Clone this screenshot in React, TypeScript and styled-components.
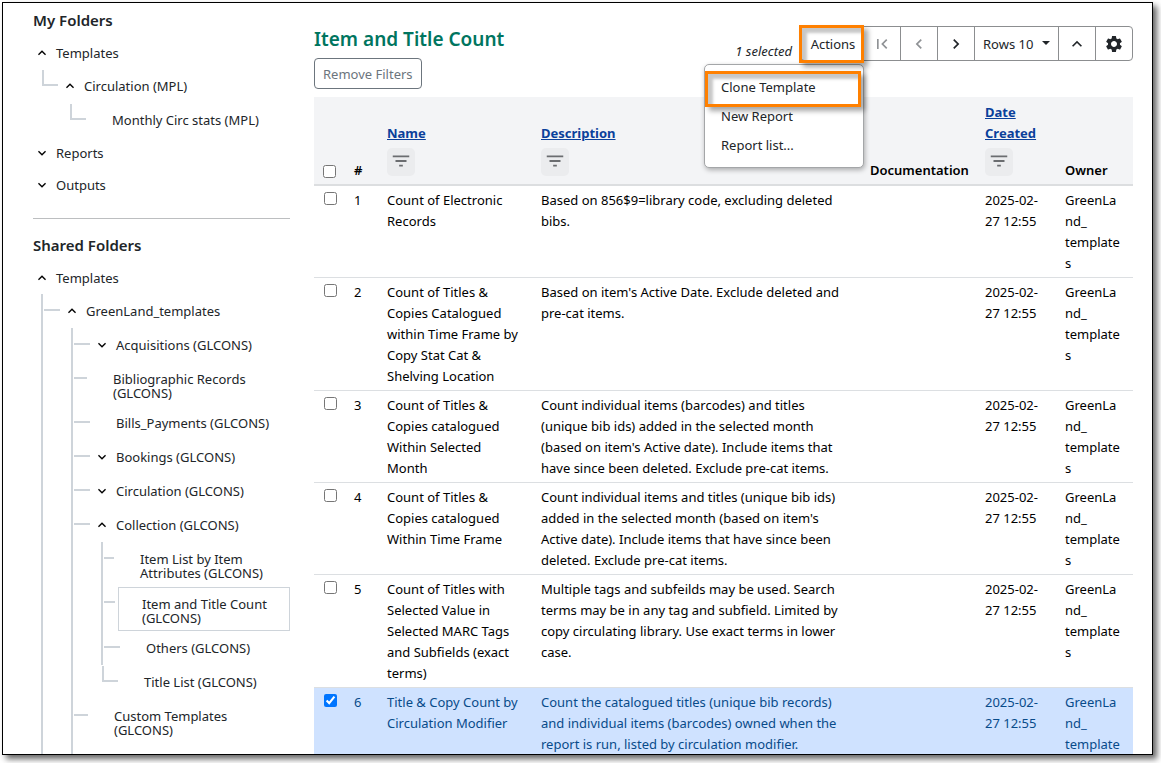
import React, { Fragment } from "react";
import styled, { createGlobalStyle, css } from "styled-components";
import {
  MdChevronLeft,
  MdChevronRight,
  MdExpandLess,
  MdExpandMore,
  MdFilterList,
  MdFirstPage,
  MdSettings,
} from "react-icons/md";

const GlobalStyle = createGlobalStyle`
  *, *::before, *::after { box-sizing: border-box; }
  body {
    margin: 0;
    background: #fff;
    color: #212529;
    font-family: "Noto Sans", "Open Sans", sans-serif;
    font-size: 13px;
    line-height: 21px;
  }
  button, select, input { font: inherit; color: inherit; }
`;

const Page = styled.div`
  height: 100vh;
  padding: 2px 8px 8px 2px;
  overflow: hidden;
`;

const Frame = styled.div`
  display: flex;
  gap: 24px;
  height: 100%;
  padding: 0 19px 0 30px;
  overflow: hidden;
  background: #fff;
  border: 1px solid #000;
  box-shadow: 4px 4px 6px rgba(0, 0, 0, 0.6);
`;

const Sidebar = styled.nav`
  flex: 0 0 257px;
  min-width: 0;
`;

const FolderSection = styled.section<{ $divided?: boolean }>`
  padding-top: 7px;
  ${(p) =>
    p.$divided &&
    css`
      padding-top: 16px;
      margin-top: 17px;
      border-top: 1px solid #bcbec0;
    `}
`;

const SectionTitle = styled.h2`
  margin: 0 0 6px;
  font-size: 15px;
  font-weight: 600;
  line-height: 21px;
`;

const TreeList = styled.ul<{ $indent?: number; $more?: boolean }>`
  margin: 0;
  margin-left: ${(p) => p.$indent ?? 0}px;
  padding: 0 0 ${(p) => (p.$more ? 24 : 0)}px;
  list-style: none;
`;

const TreeItem = styled.li<{ $line: boolean }>`
  ${(p) => p.$line && "border-left: 2px solid #ced4da;"}
`;

const TreeRow = styled.div<{ $root?: boolean }>`
  display: flex;
  align-items: flex-start;
  min-height: ${(p) => (p.$root ? 32 : 34)}px;
  padding-top: ${(p) => (p.$root ? 9 : 0)}px;
`;

const Tick = styled.span<{ $width: number; $corner: boolean }>`
  flex: none;
  width: ${(p) => p.$width}px;
  height: 17px;
  margin: 0 3px 0 1px;
  border-bottom: 2px solid #ced4da;
  ${(p) => p.$corner && "height: 16px; margin-top: 1px; border-left: 2px solid #ced4da;"}
`;

const TreeContent = styled.div<{ $root?: boolean; $selected?: boolean }>`
  display: flex;
  flex: 1;
  min-width: 0;
  padding: ${(p) => (p.$root ? 0 : "10px 8px 6px 0")};
  ${(p) =>
    p.$selected &&
    css`
      padding: 9px 8px 5px 0;
      margin-top: 1px;
      border: 1px solid #ced4da;
    `}
`;

const Toggle = styled.button`
  display: flex;
  flex: none;
  align-items: center;
  justify-content: center;
  width: 18px;
  height: 14px;
  margin-right: 5px;
  padding: 0;
  border: 0;
  background: none;
  color: #000;
`;

const ToggleSpace = styled.span`
  flex: none;
  width: 23px;
`;

const TreeLabel = styled.a`
  color: inherit;
  line-height: 14px;
  text-decoration: none;
`;

const Main = styled.main`
  flex: 1;
  min-width: 0;
`;

const GridHeader = styled.header`
  display: flex;
  align-items: flex-start;
  justify-content: space-between;
  padding: 23px 0 8px;
`;

const Heading = styled.h1`
  margin: 0 0 6px;
  color: #00755f;
  font-size: 19px;
  font-weight: 600;
  line-height: 26px;
`;

const FilterReset = styled.button`
  height: 31px;
  padding: 2px 8px 0;
  border: 1px solid #6c757d;
  border-radius: 4px;
  background: #fff;
  color: #6c757d;
`;

const Tools = styled.div`
  display: flex;
  align-items: flex-start;
`;

const SelectedCount = styled.em`
  padding: 15px 8px 0 0;
`;

const ToolGroup = styled.div`
  display: flex;
  height: 35px;
  border: 1px solid #8c8e90;
  border-radius: 4px;

  && > * + * {
    border-left: 1px solid #8c8e90;
  }
`;

const orangeMarker = css`
  content: "";
  position: absolute;
  border: 3px solid #ff8000;
  box-shadow: 4px 4px 5px rgba(0, 0, 0, 0.35), inset 5px 5px 3px rgba(0, 0, 0, 0.22);
  pointer-events: none;
`;

const ActionsBox = styled.div`
  position: relative;
  z-index: 2;
  width: 62px;

  &::after {
    ${orangeMarker}
    inset: -2px -1px -3px -2px;
  }
`;

const ToolButton = styled.button<{ $wide?: boolean }>`
  display: flex;
  align-items: center;
  justify-content: center;
  width: ${(p) => (p.$wide ? "100%" : "37px")};
  height: 33px;
  padding: ${(p) => (p.$wide ? "2px 0 0 2px" : 0)};
  border: 0;
  background: none;

  &:disabled {
    color: #8f9295;
  }
`;

const RowsField = styled.div`
  position: relative;
  width: 84px;

  &::after {
    content: "";
    position: absolute;
    top: 14px;
    right: 8px;
    border: 4px solid transparent;
    border-top-color: #212529;
    border-bottom: 0;
    pointer-events: none;
  }
`;

const RowsSelect = styled.select`
  width: 100%;
  height: 33px;
  padding: 2px 8px 0;
  border: 0;
  background: none;
  appearance: none;
`;

const Menu = styled.div`
  position: absolute;
  top: 37px;
  right: -1px;
  width: 160px;
  padding: 8px 0 7px;
  border: 1px solid #a4a6a8;
  border-radius: 5px;
  background: #fff;
  box-shadow: 1px 2px 5px rgba(0, 0, 0, 0.3);
`;

const MenuItem = styled.button<{ $marked?: boolean }>`
  position: relative;
  display: block;
  width: 100%;
  height: 29px;
  padding: 0 16px;
  border: 0;
  background: none;
  text-align: left;

  ${(p) =>
    p.$marked &&
    css`
      &::after {
        ${orangeMarker}
        inset: -2px 2px -5px 0;
      }
    `}
`;

const Table = styled.table`
  width: 100%;
  table-layout: fixed;
  border-collapse: separate;
  border-spacing: 0;
  color: #000;
`;

const Col = styled.col<{ $width?: number }>`
  ${(p) => p.$width && `width: ${p.$width}px;`}
`;

const HeadCell = styled.th<{ $check?: boolean }>`
  padding: 5px 8px 3px;
  ${(p) => p.$check && "padding: 5px 9px 6px;"}
  background: #f3f4f6;
  border-bottom: 2px solid #dcdee0;
  font-weight: 600;
  line-height: 21px;
  text-align: left;
  vertical-align: bottom;
`;

const SortLink = styled.a`
  display: block;
  color: #0a409b;
  font-weight: 700;
  text-decoration: underline;
`;

const FilterButton = styled.button`
  display: flex;
  align-items: center;
  justify-content: center;
  width: 28px;
  height: 28px;
  margin: 4px 0 5px;
  padding: 0 0 2px;
  border: 0;
  border-radius: 5px;
  background: #ebecee;
  color: #6b6d70;
`;

const Row = styled.tr<{ $selected: boolean }>`
  ${(p) => p.$selected && "background: #cfe2ff; color: #084b8a;"}
`;

const Cell = styled.td<{ $check?: boolean; $narrow?: boolean }>`
  padding: 4px 8px 3px;
  ${(p) => p.$check && "padding: 6px 10px;"}
  ${(p) => p.$narrow && "padding-right: 11px;"}
  border-bottom: 1px solid #dcdfe2;
  overflow-wrap: anywhere;
  vertical-align: top;
`;

const Checkbox = styled.input`
  display: block;
  width: 13px;
  height: 13px;
  margin: 0;
`;

type Folder = {
  name: string;
  state?: "open" | "closed";
  tick?: number;
  selected?: boolean;
  more?: boolean;
  children?: Folder[];
};

const myFolders: Folder[] = [
  {
    name: "Templates",
    state: "open",
    children: [
      { name: "Circulation (MPL)", state: "open", children: [{ name: "Monthly Circ stats (MPL)" }] },
    ],
  },
  { name: "Reports", state: "closed" },
  { name: "Outputs", state: "closed" },
];

const sharedFolders: Folder[] = [
  {
    name: "Templates",
    state: "open",
    more: true,
    children: [
      {
        name: "GreenLand_templates",
        state: "open",
        more: true,
        children: [
          { name: "Acquisitions (GLCONS)", state: "closed" },
          { name: "Bibliographic Records (GLCONS)", tick: 13 },
          { name: "Bills_Payments (GLCONS)" },
          { name: "Bookings (GLCONS)", state: "closed" },
          { name: "Circulation (GLCONS)", state: "closed" },
          {
            name: "Collection (GLCONS)",
            state: "open",
            children: [
              { name: "Item List by Item Attributes (GLCONS)", tick: 10 },
              { name: "Item and Title Count (GLCONS)", tick: 11, selected: true },
              { name: "Others (GLCONS)" },
              { name: "Title List (GLCONS)" },
            ],
          },
          { name: "Custom Templates (GLCONS)", tick: 14, more: true },
        ],
      },
    ],
  },
];

function Tree({ items, level = 0, more }: { items: Folder[]; level?: number; more?: boolean }) {
  const root = level === 0;
  const indent = root ? 0 : level === 1 ? 8 : 28;
  return (
    <TreeList $indent={indent}>
      {items.map((item, i) => {
        const last = i === items.length - 1 && !more;
        return (
          <TreeItem key={item.name} $line={!root && !last}>
            <TreeRow $root={root}>
              {!root && <Tick $width={item.tick ?? 16} $corner={last} />}
              <TreeContent $root={root} $selected={item.selected}>
                {item.state ? (
                  <Toggle aria-label={`Toggle ${item.name}`} aria-expanded={item.state === "open"}>
                    {item.state === "open" ? <MdExpandLess size={16} /> : <MdExpandMore size={16} />}
                  </Toggle>
                ) : (
                  <ToggleSpace />
                )}
                <TreeLabel href="#">{item.name}</TreeLabel>
              </TreeContent>
            </TreeRow>
            {item.children && <Tree items={item.children} level={level + 1} more={item.more} />}
            {item.more && !item.children && <TreeList $more />}
          </TreeItem>
        );
      })}
    </TreeList>
  );
}

const reports = [
  ["Count of Electronic Records", "Based on 856$9=library code, excluding deleted bibs."],
  [
    "Count of Titles & Copies Catalogued within Time Frame by Copy Stat Cat & Shelving Location",
    "Based on item's Active Date. Exclude deleted and pre-cat items.",
  ],
  [
    "Count of Titles & Copies catalogued Within Selected Month",
    "Count individual items (barcodes) and titles (unique bib ids) added in the selected month (based on item's Active date). Include items that have since been deleted. Exclude pre-cat items.",
  ],
  [
    "Count of Titles & Copies catalogued Within Time Frame",
    "Count individual items and titles (unique bib ids) added in the selected month (based on item's Active date). Include items that have since been deleted. Exclude pre-cat items.",
  ],
  [
    "Count of Titles with Selected Value in Selected MARC Tags and Subfields (exact terms)",
    "Multiple tags and subfeilds may be used. Search terms may be in any tag and subfield. Limited by copy circulating library. Use exact terms in lower case.",
  ],
  [
    "Title & Copy Count by Circulation Modifier",
    "Count the catalogued titles (unique bib records) and individual items (barcodes) owned when the report is run, listed by circulation modifier.",
  ],
];

function SortableHead({ label }: { label: string }) {
  return (
    <HeadCell scope="col">
      <SortLink href="#">{label}</SortLink>
      <FilterButton aria-label={`Filter ${label}`}>
        <MdFilterList size={22} />
      </FilterButton>
    </HeadCell>
  );
}

export default function App() {
  return (
    <Fragment>
      <GlobalStyle />
      <Page>
        <Frame>
          <Sidebar aria-label="Folders">
            <FolderSection>
              <SectionTitle>My Folders</SectionTitle>
              <Tree items={myFolders} />
            </FolderSection>
            <FolderSection $divided>
              <SectionTitle>Shared Folders</SectionTitle>
              <Tree items={sharedFolders} />
            </FolderSection>
          </Sidebar>
          <Main>
            <GridHeader>
              <div>
                <Heading>Item and Title Count</Heading>
                <FilterReset>Remove Filters</FilterReset>
              </div>
              <Tools>
                <SelectedCount>1 selected</SelectedCount>
                <ToolGroup>
                  <ActionsBox>
                    <ToolButton $wide aria-haspopup="menu" aria-expanded>
                      Actions
                    </ToolButton>
                    <Menu role="menu">
                      <MenuItem role="menuitem" $marked>
                        Clone Template
                      </MenuItem>
                      <MenuItem role="menuitem">New Report</MenuItem>
                      <MenuItem role="menuitem">Report list...</MenuItem>
                    </Menu>
                  </ActionsBox>
                  <ToolButton disabled aria-label="First page">
                    <MdFirstPage size={20} />
                  </ToolButton>
                  <ToolButton disabled aria-label="Previous page">
                    <MdChevronLeft size={20} />
                  </ToolButton>
                  <ToolButton aria-label="Next page">
                    <MdChevronRight size={20} />
                  </ToolButton>
                  <RowsField>
                    <RowsSelect aria-label="Rows per page">
                      <option>Rows 10</option>
                    </RowsSelect>
                  </RowsField>
                  <ToolButton aria-label="Collapse rows">
                    <MdExpandLess size={20} />
                  </ToolButton>
                  <ToolButton aria-label="Grid settings">
                    <MdSettings size={20} />
                  </ToolButton>
                </ToolGroup>
              </Tools>
            </GridHeader>
            <Table>
              <colgroup>
                <Col $width={32} />
                <Col $width={33} />
                <Col $width={154} />
                <Col />
                <Col $width={115} />
                <Col $width={80} />
                <Col $width={76} />
              </colgroup>
              <thead>
                <tr>
                  <HeadCell $check scope="col">
                    <Checkbox type="checkbox" aria-label="Select all rows" />
                  </HeadCell>
                  <HeadCell scope="col">#</HeadCell>
                  <SortableHead label="Name" />
                  <SortableHead label="Description" />
                  <HeadCell scope="col">Documentation</HeadCell>
                  <SortableHead label="Date Created" />
                  <HeadCell scope="col">Owner</HeadCell>
                </tr>
              </thead>
              <tbody>
                {reports.map(([name, description], i) => (
                  <Row key={name} $selected={i === 5}>
                    <Cell $check>
                      <Checkbox type="checkbox" aria-label={`Select row ${i + 1}`} defaultChecked={i === 5} />
                    </Cell>
                    <Cell>{i + 1}</Cell>
                    <Cell>{name}</Cell>
                    <Cell>{description}</Cell>
                    <Cell />
                    <Cell>
                      2025-02-
                      <wbr />
                      27 12:55
                    </Cell>
                    <Cell $narrow>
                      GreenLand_
                      <wbr />
                      templates
                    </Cell>
                  </Row>
                ))}
              </tbody>
            </Table>
          </Main>
        </Frame>
      </Page>
    </Fragment>
  );
}
